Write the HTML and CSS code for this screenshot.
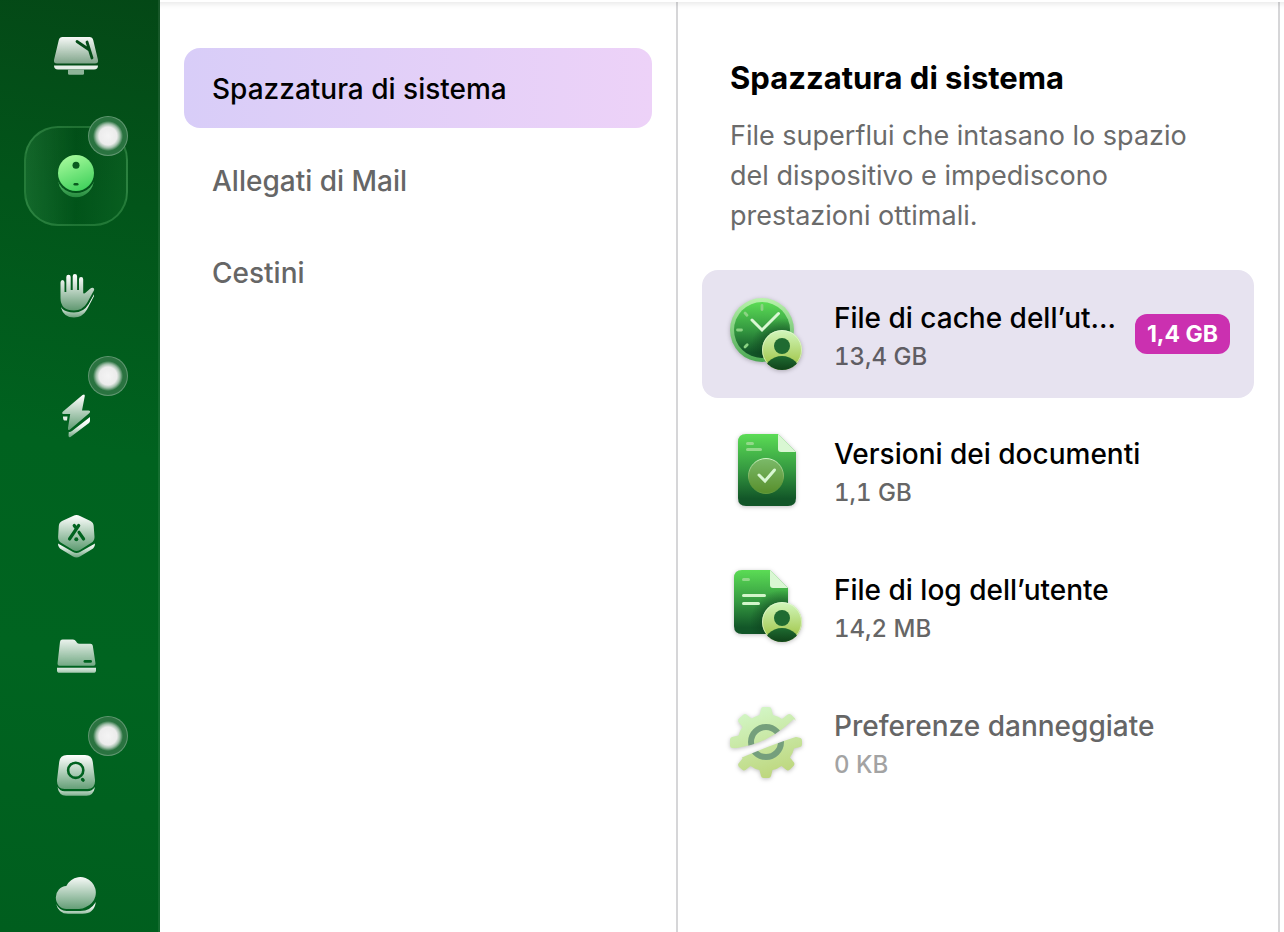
FILE: index.html
```html
<!DOCTYPE html>
<html lang="it">
  <head>
    <meta charset="UTF-8" />
    <meta name="viewport" content="width=device-width, initial-scale=1.0" />
    <title>Spazzatura di sistema</title>
    <link rel="stylesheet" href="styles.css">
  </head>
  <body>
    <div class="app">
      <!-- Sidebar -->
      <nav class="sidebar">
        <button class="nav-item" aria-label="Smart Care">
          <svg class="nav-icon" viewBox="0 0 48 48">
            <defs>
              <linearGradient id="metal" x1="0" y1="3" x2="0" y2="38" gradientUnits="userSpaceOnUse">
                <stop offset="0" stop-color="#fff" />
                <stop offset="1" stop-color="#fff" stop-opacity="0.38" />
              </linearGradient>
              <linearGradient id="base" x1="0" y1="28" x2="0" y2="46" gradientUnits="userSpaceOnUse">
                <stop offset="0" stop-color="#fff" />
                <stop offset="0.4" stop-color="#fff" stop-opacity="0.9" />
                <stop offset="1" stop-color="#fff" stop-opacity="0.4" />
              </linearGradient>
            </defs>
            <mask id="crack">
              <rect width="48" height="48" fill="#fff" />
              <path d="M25 9.500L37.500 18M35 10L37.500 18L40 26" fill="none" stroke="#000" stroke-width="2.800" stroke-linecap="round" />
            </mask>
            <path mask="url(#crack)" fill="url(#metal)" d="M10.500 5h27q3 0 3.700 3L46 28q.5 3.500-3 3.500H5q-3.500 0-3-3.500L6.800 8q.7-3 3.700-3z" />
            <path fill="#e6efe8" d="M2 33.500h44q0 4-4 4H6q-4 0-4-4z" />
            <path fill="#8fb499" d="M16 37.500h16v4q0 1.300-1.300 1.300H17.300q-1.300 0-1.300-1.300z" />
          </svg>
        </button>

        <button class="nav-item active" aria-label="Pulizia">
          <svg class="nav-icon" viewBox="0 0 48 48">
            <defs>
              <linearGradient id="ball" x1="0.300" y1="0" x2="0.700" y2="1">
                <stop offset="0" stop-color="#a5fa9b" />
                <stop offset="1" stop-color="#3fd05b" />
              </linearGradient>
              <linearGradient id="ball-base" x1="0" y1="0" x2="0" y2="1">
                <stop offset="0.600" stop-color="#55b867" />
                <stop offset="1" stop-color="#268a3e" />
              </linearGradient>
            </defs>
            <mask id="ball-cut">
              <rect width="48" height="48" fill="#fff" />
              <circle cx="24" cy="21" r="20" />
            </mask>
            <circle mask="url(#ball-cut)" cx="24" cy="27.500" r="17.800" fill="url(#ball-base)" />
            <circle cx="24" cy="21" r="18" fill="url(#ball)" />
            <circle cx="24" cy="13.300" r="3.500" fill="#0a5a1f" />
            <rect x="21.500" y="31" width="5" height="2.600" rx="1.300" fill="#0a5a1f" />
          </svg>
          <span class="dot"></span>
        </button>

        <button class="nav-item" aria-label="Protezione">
          <svg class="nav-icon" viewBox="0 0 48 48">
            <defs>
              <path id="hand" d="M8.500 10.500q0-2.500 2-2.500t2 2.500V20h1.800V5q0-2.200 2.200-2.200T18.700 5v13h2V4.200Q20.700 2 22.900 2t2.200 2.200V18h1.900V7.200Q27 5 29.100 5t2.100 2.200V21q1 1.200 2.300-.2l4.600-4q1.600-1.300 3.300-.8 1.400.6.5 2.400L35 31q-4.500 7.500-13 7.500-13.500 0-13.500-12.500z" />
            </defs>
            <mask id="hand-cut">
              <rect width="48" height="48" fill="#fff" />
              <use href="#hand" stroke="#000" stroke-width="4" />
              <rect width="48" height="22" />
              <rect width="9" height="30" />
            </mask>
            <path mask="url(#hand-cut)" fill="url(#base)" d="M9 33l33-14.500V24L35 37.500q-4.500 8-13 8-10.500 0-13-10z" />
            <use href="#hand" fill="url(#metal)" />
          </svg>
        </button>

        <button class="nav-item" aria-label="Prestazioni">
          <svg class="nav-icon" viewBox="0 0 48 48">
            <path fill="url(#metal)" d="M11 19.500L30.500 3q2.500-1.500 2.300 1L30 18.500h6.500q2.500.4 1 2.500L18 37.500q-2.500 1.500-2-1.500l2.200-14h-6.700q-2.500-.4-.5-2.500z" />
            <path fill="#e3eee6" d="M11 24.500h4.500L15 28.500h-2.500q-1.500 0-1.500-4z" />
            <path fill="url(#base)" d="M38 25v3.500q0 1.500-1 2.500L18.500 45q-2 1-2-1.500l.3-3.500q1.700.2 3.200-1z" />
          </svg>
          <span class="dot"></span>
        </button>

        <button class="nav-item" aria-label="Applicazioni">
          <svg class="nav-icon" viewBox="0 0 48 48">
            <mask id="apps-cut">
              <rect width="48" height="48" fill="#fff" />
              <path d="M17.500 27L26.700 13.500M22.200 13.500l1.500 2.200M27 20.300l4.600 6.700" fill="none" stroke="#000" stroke-width="3.200" stroke-linecap="round" />
              <circle cx="24.300" cy="27.200" r="2" />
            </mask>
            <path mask="url(#apps-cut)" fill="url(#metal)" d="M21 4q3.500-1.800 7 0l10.500 5q3 1.500 3.200 5l.8 11q0 4-3.500 6L28 38q-3.500 2-7 0L9.500 31Q6 29 6.100 25l.7-11q.2-3.500 3.200-5z" />
            <path fill="url(#base)" d="M6 31.500L21 40q3.500 2 7 0l15-8.500q0 4-3.500 6L28 44.500q-3.500 2-7 0l-11.500-7Q6 35.500 6 31.500z" />
          </svg>
        </button>

        <button class="nav-item" aria-label="I miei file">
          <svg class="nav-icon" viewBox="0 0 48 48">
            <mask id="folder-cut">
              <rect width="48" height="48" fill="#fff" />
              <rect x="31.500" y="28" width="8.500" height="2.800" rx="1.400" />
            </mask>
            <path mask="url(#folder-cut)" fill="url(#metal)" d="M10.500 7.500H21q2 0 3 1.800l.8 1.200q.9 1.300 2.700 1.300h11q2 0 2.300 2L43.500 31.500q.2 2.200-2 2.200h-34q-2.200 0-2-2.200L8 9.800q.3-2.300 2.500-2.300z" />
            <path fill="url(#base)" d="M5 35.800h39v2.400q0 2.600-2.600 2.600H7.600Q5 40.800 5 38.200z" />
          </svg>
        </button>

        <button class="nav-item" aria-label="Spazio">
          <svg class="nav-icon" viewBox="0 0 48 48">
            <mask id="lens-cut">
              <rect width="48" height="48" fill="#fff" />
              <circle cx="23.700" cy="18.300" r="7.600" fill="none" stroke="#000" stroke-width="2.600" />
              <path d="M30.500 27.500l.7.700" stroke="#000" stroke-width="3.200" stroke-linecap="round" />
            </mask>
            <path mask="url(#lens-cut)" fill="url(#metal)" d="M15 3h18q7 0 7.800 7l2.200 18q.5 9-7.500 9h-23q-8 0-7.500-9L7.200 10Q8 3 15 3z" />
            <path fill="url(#base)" d="M5.500 35q2.500 4.200 7 4.200h23q4.500 0 7.500-4.200-1.500 8.800-8.500 8.800h-20.500Q7 43.800 5.500 35z" />
          </svg>
          <span class="dot"></span>
        </button>

        <button class="nav-item" aria-label="Cloud">
          <svg class="nav-icon" viewBox="0 0 48 48">
            <path fill="url(#metal)" d="M14.300 14A15.500 15.500 0 1 1 33.500 35.200Q31 37 27 37H14.500A10.500 11.400 0 0 1 14.300 14z" />
            <path fill="url(#base)" d="M4.200 32Q7.500 39 14.500 39h14q10 0 15.300-9-1.500 11.800-13.300 11.800H16Q6.500 41.800 4.200 32z" />
          </svg>
        </button>
      </nav>

      <div class="content">
        <!-- Categories -->
        <div class="categories">
          <button class="category selected">Spazzatura di sistema</button>
          <button class="category">Allegati di Mail</button>
          <button class="category">Cestini</button>
        </div>

        <!-- Details -->
        <main class="details">
          <div class="intro">
            <h1>Spazzatura di sistema</h1>
            <p>File superflui che intasano lo spazio del dispositivo e impediscono prestazioni ottimali.</p>
          </div>

          <button class="row selected">
            <svg class="row-icon" viewBox="0 0 72 72">
              <defs>
                <linearGradient id="green" x1="0" y1="0" x2="0" y2="1">
                  <stop offset="0" stop-color="#5bdc55" />
                  <stop offset="0.500" stop-color="#349840" />
                  <stop offset="0.900" stop-color="#125628" />
                </linearGradient>
                <linearGradient id="rim" x1="0" y1="0" x2="0" y2="1">
                  <stop offset="0" stop-color="#b9f3ac" />
                  <stop offset="1" stop-color="#4ba852" />
                </linearGradient>
                <linearGradient id="lime" x1="0" y1="0" x2="0" y2="1">
                  <stop offset="0" stop-color="#d2f7bd" />
                  <stop offset="1" stop-color="#9bbf3a" />
                </linearGradient>
                <linearGradient id="lime-body" x1="0" y1="0" x2="0" y2="0.400">
                  <stop offset="0" stop-color="#1f6b31" />
                  <stop offset="1" stop-color="#0e3f17" />
                </linearGradient>
                <radialGradient id="shade">
                  <stop offset="0.500" stop-color="#0c3c1b" stop-opacity="0.600" />
                  <stop offset="1" stop-color="#0c3c1b" stop-opacity="0" />
                </radialGradient>
                <clipPath id="clock-clip"><circle cx="32" cy="32" r="28" /></clipPath>
                <clipPath id="user-clip"><circle cx="20" cy="20" r="20" /></clipPath>
                <g id="user">
                  <circle cx="20" cy="20" r="20" fill="url(#lime)" />
                  <circle cx="20" cy="20" r="19.500" fill="none" stroke="#e9fbdc" stroke-opacity="0.600" />
                  <circle cx="20" cy="16" r="8" fill="#1f6b31" />
                  <circle clip-path="url(#user-clip)" cx="20" cy="45" r="19" fill="url(#lime-body)" />
                </g>
              </defs>
              <circle cx="32" cy="32" r="32" fill="url(#rim)" />
              <circle cx="32" cy="32" r="28" fill="url(#green)" />
              <circle clip-path="url(#clock-clip)" cx="52" cy="52" r="32" fill="url(#shade)" />
              <path d="M32 7.500v4M15 15l2 2.200M7.500 32h4M15 49l2.200-2.200" fill="none" stroke="#8bd383" stroke-width="2.800" stroke-linecap="round" />
              <path d="M22 22l10 10 16.500-16.500" fill="none" stroke="#d9f7d3" stroke-width="3" stroke-linecap="round" />
              <use href="#user" x="32" y="32" />
            </svg>
            <span class="row-text">
              <span class="row-title">File di cache dell’ut…</span>
              <span class="row-size">13,4 GB</span>
            </span>
            <span class="badge">1,4 GB</span>
          </button>

          <button class="row">
            <svg class="row-icon" viewBox="0 0 72 72">
              <defs>
                <linearGradient id="disc" x1="0" y1="0" x2="0" y2="1">
                  <stop offset="0" stop-color="#7bba69" />
                  <stop offset="1" stop-color="#588f2c" />
                </linearGradient>
                <linearGradient id="disc-edge" x1="0" y1="0" x2="0" y2="1">
                  <stop offset="0" stop-color="#d0f5c6" />
                  <stop offset="0.700" stop-color="#629a3c" />
                </linearGradient>
              </defs>
              <path fill="url(#green)" d="M16 0h32l18 18v46q0 8-8 8H16q-8 0-8-8V8q0-8 8-8z" />
              <path fill="#d9f7d3" d="M48 0l18 18H51q-3 0-3-3z" />
              <path d="M17.500 9.500h5M17.500 15.500h13" stroke="#93d98a" stroke-width="3" stroke-linecap="round" />
              <circle cx="36" cy="42" r="17.500" fill="url(#disc)" stroke="url(#disc-edge)" />
              <path d="M29 41l6 6 9.500-11" fill="none" stroke="#d9f7d3" stroke-width="3" stroke-linecap="round" />
            </svg>
            <span class="row-text">
              <span class="row-title">Versioni dei documenti</span>
              <span class="row-size">1,1 GB</span>
            </span>
          </button>

          <button class="row">
            <svg class="row-icon" viewBox="0 0 72 72">
              <clipPath id="log-clip">
                <path d="M12 0h28l18 18v46H12q-8 0-8-8V8q0-8 8-8z" />
              </clipPath>
              <path fill="url(#green)" d="M12 0h28l18 18v38q0 8-8 8H12q-8 0-8-8V8q0-8 8-8z" />
              <circle clip-path="url(#log-clip)" cx="52" cy="52" r="32" fill="url(#shade)" />
              <path fill="#d9f7d3" d="M40 0l18 18H43q-3 0-3-3z" />
              <path d="M13.500 9.500h5" stroke="#93d98a" stroke-width="3" stroke-linecap="round" />
              <path d="M13.500 25.500h21M13.500 33.500h15" stroke="#d2f5ca" stroke-width="3" stroke-linecap="round" />
              <use href="#user" x="32" y="32" />
            </svg>
            <span class="row-text">
              <span class="row-title">File di log dell’utente</span>
              <span class="row-size">14,2 MB</span>
            </span>
          </button>

          <button class="row disabled" disabled>
            <svg class="row-icon" viewBox="0 0 72 72">
              <defs>
                <linearGradient id="gear-fill" x1="0.300" y1="0" x2="0.600" y2="1">
                  <stop offset="0" stop-color="#d3f7c8" />
                  <stop offset="1" stop-color="#bdd67c" />
                </linearGradient>
                <mask id="gear-cut">
                  <rect width="72" height="72" fill="#fff" />
                  <path d="M-2 42.500Q34 42 64 13L76 28Q50 35 6 54z" />
                </mask>
              </defs>
              <g mask="url(#gear-cut)">
                <path fill="url(#gear-fill)" d="M33 1h6q2 0 2.500 2l1.500 6q6 1.500 9 4l5-4q2-1.500 4-.5l4 4q1 2-.5 4l-4 5q2.500 4 4 9l6 1.500q1.500.5 1.500 2.500v4q0 2-2 2.500l-6 1.500q-1 5-4 9l4 5q1 2-.5 3.500l-3.500 3.500q-2 1.500-3.500.5l-5-4q-4 3-9 4l-1.500 6q-.5 2-2.500 2h-5q-2 0-2.500-2l-1.500-6q-5-1-9-4l-5 4q-2 1-3.500-.5L9 61q-1.500-2-.5-3.500l4-5q-3-4-4-9l-6.500-1.500q-2-.5-2-2.500v-6q0-2 2-2.500l6.500-1.500q1-4.500 4-8.500l-4-5q-1-2 .5-3.500l4-3.500q1.500-1.500 3.500-.5l5 4q4-2.500 8-3.500l1.500-6q.5-2 2-2z" />
                <circle cx="36" cy="36" r="15" fill="none" stroke="#759f7c" stroke-width="6" />
              </g>
            </svg>
            <span class="row-text">
              <span class="row-title">Preferenze danneggiate</span>
              <span class="row-size">0 KB</span>
            </span>
          </button>
        </main>
      </div>
    </div>
  </body>
</html>
```
FILE: styles.css
```css
* {
  box-sizing: border-box;
}

body {
  margin: 0;
  font-family: Inter, "Liberation Sans", sans-serif;
  background-color: #fff;
  color: #000;
}

button {
  font: inherit;
  color: inherit;
  border: none;
  background: none;
  padding: 0;
  cursor: pointer;
}

.app {
  display: flex;
  height: 100vh;
  overflow: hidden;
}

/* Sidebar */
.sidebar {
  flex: 0 0 160px;
  display: flex;
  flex-direction: column;
  gap: 20px;
  padding: 6px 30px 0 24px;
  border-right: 2px solid rgba(255, 255, 255, 0.08);
  background: linear-gradient(190deg, #044816 0%, #02551a 22%, #00621f 48%, #006420 70%, #005e1e 100%) border-box;
  overflow: hidden;
}

.nav-item {
  position: relative;
  flex: 0 0 100px;
  display: flex;
  align-items: center;
  justify-content: center;
  border: 2px solid transparent;
  border-radius: 34px;
}

.nav-item.active {
  border-color: rgba(120, 210, 130, 0.25);
  background: linear-gradient(90deg, rgba(100, 190, 120, 0.18), rgba(0, 70, 20, 0.1) 50%, rgba(60, 160, 80, 0.12));
}

.nav-icon {
  width: 48px;
  height: 48px;
}

/* Notification light */
.dot {
  position: absolute;
  top: -12px;
  right: -2px;
  width: 40px;
  height: 40px;
  border: 1px solid rgba(255, 255, 255, 0.25);
  border-radius: 50%;
  background: radial-gradient(circle, #f4f4f4 0, #ececec 9px, rgba(240, 240, 240, 0.6) 12px, rgba(255, 255, 255, 0) 15px), #2a7340;
}

/* Content */
.content {
  position: relative;
  flex: 1;
  display: flex;
  min-width: 0;
  padding: 2px 4px 0 0;
}

/* Soft shadow under the toolbar */
.content::before {
  content: "";
  position: absolute;
  top: 2px;
  left: 0;
  right: 0;
  height: 8px;
  background: linear-gradient(rgba(0, 0, 0, 0.07), rgba(0, 0, 0, 0.01) 60%, rgba(0, 0, 0, 0));
}

.categories {
  flex: 0 0 518px;
  display: flex;
  flex-direction: column;
  gap: 12px;
  padding: 46px 24px 0;
  border-right: 2px solid #d6d6d8;
}

.category {
  height: 80px;
  padding: 2px 28px 0;
  border-radius: 16px;
  font-size: 28px;
  font-weight: 500;
  text-align: left;
  color: #666;
}

.category.selected {
  color: #000;
  background: linear-gradient(90deg, #d8cdf8, #edd2f8);
}

/* Details */
.details {
  flex: 1;
  display: flex;
  flex-direction: column;
  gap: 8px;
  min-width: 0;
  padding: 56px 24px 0;
  border-right: 2px solid #d6d6d8;
}

.intro {
  padding: 0 28px 26px;
}

.intro h1 {
  margin: 0 0 18px;
  font-size: 31px;
  font-weight: 700;
  line-height: 40px;
}

.intro p {
  margin: 0;
  font-size: 27px;
  line-height: 40px;
  color: #6b6b6b;
}

.row {
  display: flex;
  align-items: center;
  height: 128px;
  padding: 0 24px 0 28px;
  border-radius: 16px;
  text-align: left;
}

.row.selected {
  background-color: #e7e3f0;
}

.row-icon {
  flex: none;
  width: 72px;
  height: 72px;
  margin-right: 32px;
  overflow: visible;
  filter: drop-shadow(0 1px 2px rgba(0, 0, 0, 0.25));
}

.row-text {
  flex: 1;
  display: flex;
  flex-direction: column;
  min-width: 0;
  padding-top: 6px;
}

.row-title {
  font-size: 28px;
  font-weight: 500;
  line-height: 40px;
  white-space: nowrap;
}

.row-size {
  font-size: 24px;
  font-weight: 500;
  font-variant-numeric: tabular-nums;
  line-height: 38px;
  color: #666;
}

.row.selected .row-size {
  color: #5f5d63;
}

.badge {
  margin-left: 16px;
  padding: 0 12px;
  border-radius: 12px;
  background-color: #cb30b0;
  color: #fff;
  font-size: 23px;
  font-weight: 700;
  line-height: 40px;
  white-space: nowrap;
}

.row.disabled {
  cursor: default;
}

.row.disabled .row-title {
  color: #666;
}

.row.disabled .row-size {
  color: #a3a3a3;
}
```
